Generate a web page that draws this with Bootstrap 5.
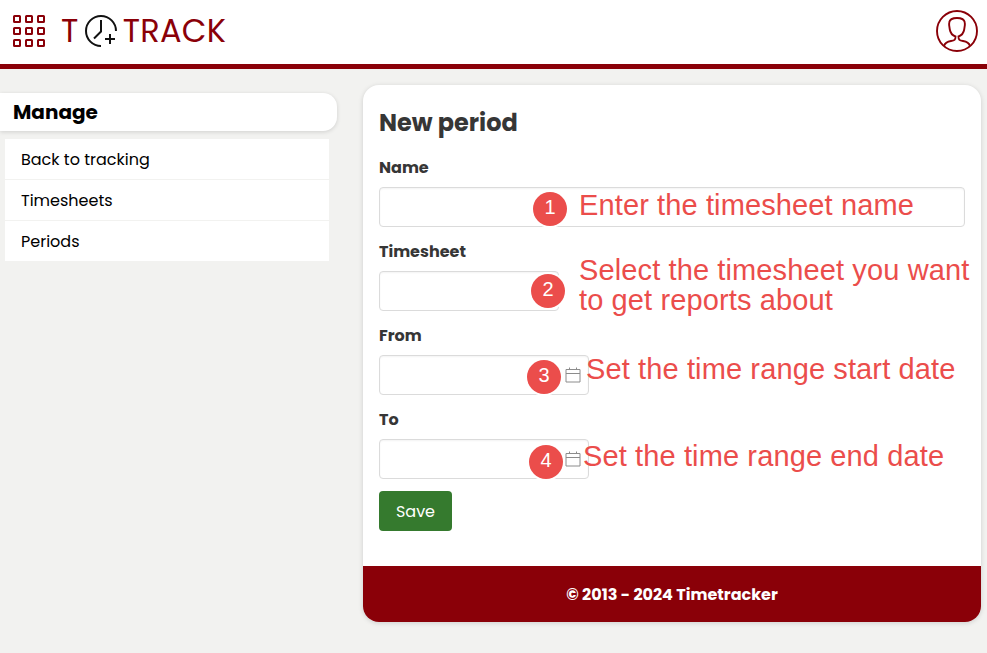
<!DOCTYPE html>
<html lang="en">
<head>
<meta charset="utf-8">
<meta name="viewport" content="width=device-width, initial-scale=1">
<title>Timetracker - New period</title>
<link href="https://cdn.jsdelivr.net/npm/bootstrap@5.3.0/dist/css/bootstrap.min.css" rel="stylesheet">
<style>
  :root { --brand: #8a0008; --note: #eb4d4b; --note-font: "Liberation Sans", Arial, sans-serif; }
  body { font-family: Poppins, Inter, sans-serif; font-size: 16px; background: #f2f2f0; color: #000; min-height: 653px; overflow: hidden; }
  .topbar { height: 69px; border-bottom: 5px solid var(--brand); padding: 0 9px 0 13px; }
  .brand { color: var(--brand); font-size: 32px; line-height: 48px; margin: 7px 0 0 16px; height: 48px; }
  .brand .word { letter-spacing: .2px; margin-left: 4.5px; }
  .brand svg { margin: 7px 0 0 6px; }
  .grid-icon { margin-top: 15px; }
  .user-icon { margin-top: 10px; }
  .side { width: 337px; padding-top: 24px; }
  .side-title { height: 38px; line-height: 38px; padding-left: 13px; font-size: 20px; border-radius: 0 14px 14px 0; box-shadow: 0 1px 4px rgba(0,0,0,.14); }
  .side-menu { margin: 8px 8px 0 5px; }
  .side-menu .list-group-item { height: 41px; line-height: 24px; padding: 9px 16px 7px; border: 0; border-bottom: 1px solid #f2f2f0; color: #000; }
  .panel { width: 618px; height: 537px; margin: 16px 0 0 26px; border-radius: 16px; box-shadow: 0 1px 5px rgba(0,0,0,.15); color: #363636; }
  .panel-main { padding: 17px 16px 0; height: 481px; }
  .panel h1 { font-size: 24px; line-height: 42px; margin-bottom: 12px; }
  .form-label { display: block; height: 24px; line-height: 24px; margin: 0 0 7px; }
  .entry { height: 84px; }
  .form-control { height: 40px; border-color: #dbdbdb; border-radius: 4px; box-shadow: inset 0 1px 2px rgba(10,10,10,.05); }
  .short { width: 210px; }
  .mid { width: 180px; }
  .cal { top: 11px; left: 186px; }
  .btn-save { background: #357a2e; color: #fff; width: 73px; height: 40px; border-radius: 4px; padding: 2px 0 0; border: 0; margin-top: -1px; }
  .panel-foot { height: 56px; line-height: 56px; padding-top: 1px; background: var(--brand); border-radius: 0 0 16px 16px; }
  .note { color: var(--note); font: 29px/30px var(--note-font); letter-spacing: .12px; white-space: nowrap; }
  .dot { width: 34px; height: 34px; background: var(--note); color: #fff; font: 20px/31px var(--note-font); text-align: center; box-shadow: 0 0 0 2px #fff; }
  .d1 { left: 154px; top: 5px; } .n1 { left: 200px; top: 3px; }
  .d2 { left: 152px; top: 3px; } .n2 { left: 200px; top: -16px; }
  .d3 { left: 148px; top: 5px; } .n3 { left: 207px; top: -1px; }
  .d4 { left: 150px; top: 6px; } .n4 { left: 204px; top: 2px; }
</style>
</head>
<body>
<header class="topbar bg-white d-flex align-items-start">
  <svg class="grid-icon flex-shrink-0" width="32" height="32" fill="none" stroke="#8a0008" stroke-width="2">
    <g id="cells"><rect x="1" y="1" width="6" height="6" rx=".5"/><rect x="13" y="1" width="6" height="6" rx=".5"/><rect x="25" y="1" width="6" height="6" rx=".5"/></g>
    <use href="#cells" y="12"/><use href="#cells" y="24"/>
  </svg>
  <div class="brand d-flex">
    <span>T</span>
    <svg width="34" height="34" viewBox="0 0 34 34" fill="none" stroke="#111" stroke-width="2">
      <path d="M17 32A15 15 0 1 1 32 17M17 6v11.500l-7 7M21 25h10M26 20v10"/>
    </svg>
    <span class="word">TRACK</span>
  </div>
  <svg class="user-icon ms-auto" width="42" height="42" viewBox="0 0 42 42" fill="none" stroke="#8a0008" stroke-width="1.9">
    <circle cx="21" cy="21" r="20"/>
    <path d="M8 36C9 32.500 11.500 31.500 15 31C18.500 30.500 19.500 30 19.500 26.500C16.500 25.500 14.500 23.500 13.800 19.500C13 16 12.800 14.500 13.200 12.500C13.800 9 17 8 21 8S28.200 9 28.800 12.500C29.200 14.500 29 16 28.200 19.500C27.500 23.500 25.500 25.500 22.500 26.500C22.500 30 23.500 30.500 27 31C30.500 31.500 33 32.500 34 36"/>
  </svg>
</header>
<div class="d-flex align-items-start">
  <aside class="side flex-shrink-0">
    <div class="side-title bg-white fw-bold">Manage</div>
    <nav class="side-menu list-group rounded-0">
      <a href="#" class="list-group-item">Back to tracking</a>
      <a href="#" class="list-group-item">Timesheets</a>
      <a href="#" class="list-group-item">Periods</a>
    </nav>
  </aside>
  <main class="panel bg-white flex-shrink-0">
    <form class="panel-main">
      <h1 class="fw-bold">New period</h1>
      <div class="entry">
        <label class="form-label fw-bold" for="name">Name</label>
        <div class="position-relative">
          <input id="name" class="form-control">
          <span class="dot d1 rounded-circle position-absolute">1</span>
          <span class="note n1 position-absolute">Enter the timesheet name</span>
        </div>
      </div>
      <div class="entry">
        <label class="form-label fw-bold" for="sheet">Timesheet</label>
        <div class="position-relative">
          <input id="sheet" class="form-control mid">
          <span class="dot d2 rounded-circle position-absolute">2</span>
          <span class="note n2 position-absolute">Select the timesheet you want<br>to get reports about</span>
        </div>
      </div>
      <div class="entry">
        <label class="form-label fw-bold" for="from">From</label>
        <div class="position-relative">
          <input id="from" class="form-control short">
          <svg class="cal position-absolute" width="16" height="18" fill="none" stroke="#8c8c8c"><path d="M1 3.500h14v12.500h-14zM1 7.500h14M4.500 1.500v2M11.500 1.500v2"/></svg>
          <span class="dot d3 rounded-circle position-absolute">3</span>
          <span class="note n3 position-absolute">Set the time range start date</span>
        </div>
      </div>
      <div class="entry">
        <label class="form-label fw-bold" for="to">To</label>
        <div class="position-relative">
          <input id="to" class="form-control short">
          <svg class="cal position-absolute" width="16" height="18" fill="none" stroke="#8c8c8c"><path d="M1 3.500h14v12.500h-14zM1 7.500h14M4.500 1.500v2M11.500 1.500v2"/></svg>
          <span class="dot d4 rounded-circle position-absolute">4</span>
          <span class="note n4 position-absolute">Set the time range end date</span>
        </div>
      </div>
      <button type="button" class="btn btn-save">Save</button>
    </form>
    <footer class="panel-foot text-white text-center fw-bold">© 2013 - 2024 Timetracker</footer>
  </main>
</div>
<script src="https://cdn.jsdelivr.net/npm/bootstrap@5.3.0/dist/js/bootstrap.bundle.min.js"></script>
</body>
</html>
